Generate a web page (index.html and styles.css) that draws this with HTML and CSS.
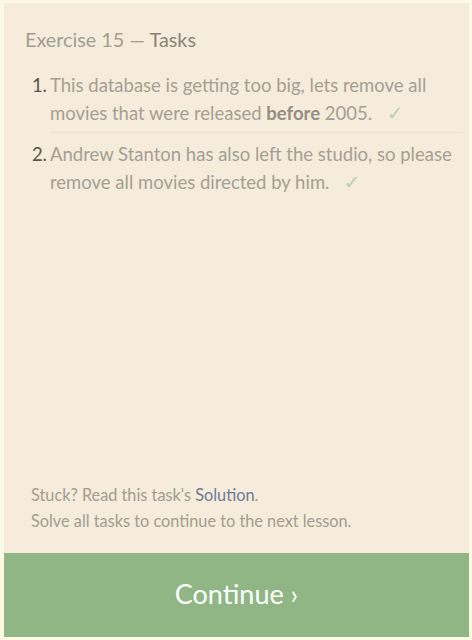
FILE: index.html
```html
<!DOCTYPE html>
<html>
<head>
<meta charset="utf-8">
<link rel="stylesheet" href="styles.css">
</head>
<body>
<div class="panel">
  <div class="content">
    <h2 class="title">Exercise 15 — <span class="title-strong">Tasks</span></h2>
    <ol class="tasks">
      <li class="task"><span class="num">1.</span><span class="text">This database is getting too big, lets remove all movies that were released <b>before</b> 2005. <span class="check">✓</span></span></li>
      <li class="task"><span class="num">2.</span><span class="text">Andrew Stanton has also left the studio, so please remove all movies directed by him. <span class="check">✓</span></span></li>
    </ol>
  </div>
  <div class="footer">
    <p class="note">Stuck? Read this task's <a class="link">Solution</a>.<br>Solve all tasks to continue to the next lesson.</p>
  </div>
  <div class="continue">Continue ›</div>
</div>
</body>
</html>
```

FILE: styles.css
```css
html, body {
  margin: 0;
  padding: 0;
  background: #fdf9e4;
}
body {
  font-family: Lato, "Open Sans", sans-serif;
  width: 472px;
  height: 640px;
  overflow: hidden;
}
.panel {
  margin: 3px 3px 0 4px;
  height: 634px;
  background: #f5ecdb;
  display: flex;
  flex-direction: column;
}
.content {
  padding: 23px 8px 0 21px;
}
.title {
  margin: 0;
  font-size: 19.8px;
  font-weight: normal;
  color: #a39d92;
  line-height: 26px;
}
.title-strong {
  color: #8b8478;
}
.tasks {
  list-style: none;
  margin: 19px 0 0 0;
  padding: 0;
}
.task {
  display: flex;
  font-size: 18.5px;
  line-height: 28px;
  color: #a59f94;
}
.num {
  width: 24px;
  flex: none;
  color: #5a544c;
  text-align: right;
  padding-right: 3px;
  box-sizing: border-box;
  margin-left: 1px;
}
.text {
  flex: 1;
  padding-bottom: 5px;
}
.task:first-child .text {
  border-bottom: 1px solid #ebe1cd;
  margin-bottom: 7px;
}
.text b {
  color: #958e83;
}
.check {
  color: #b9cfae;
  margin-left: 10px;
}
.footer {
  margin-top: auto;
  padding: 0 12px 19px 27px;
}
.note {
  margin: 0;
  font-size: 16.3px;
  line-height: 26px;
  color: #a39d92;
}
.link {
  color: #707a97;
}
.continue {
  height: 84px;
  padding-bottom: 3px;
  box-sizing: border-box;
  background: #8fb684;
  color: #ffffff;
  font-size: 27px;
  display: flex;
  align-items: center;
  justify-content: center;
}
```
